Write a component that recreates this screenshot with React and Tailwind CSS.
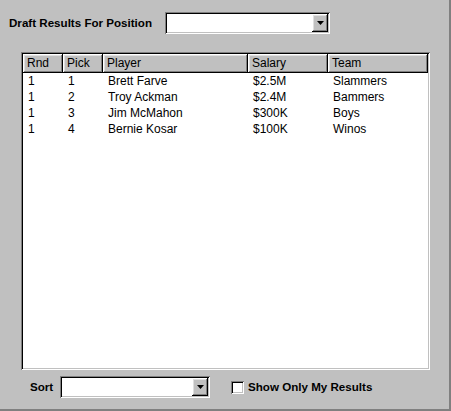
import React from "react";

const sunken =
  "shadow-[inset_1px_1px_0_#808080,inset_-1px_-1px_0_#ffffff,inset_2px_2px_0_#000000,inset_-2px_-2px_0_#c0c0c0]";
const raised =
  "shadow-[inset_-1px_-1px_0_#000000,inset_1px_1px_0_#ffffff,inset_-2px_-2px_0_#808080,inset_2px_2px_0_#dfdfdf]";

const rows = [
  ["1", "1", "Brett Farve", "$2.5M", "Slammers"],
  ["1", "2", "Troy Ackman", "$2.4M", "Bammers"],
  ["1", "3", "Jim McMahon", "$300K", "Boys"],
  ["1", "4", "Bernie Kosar", "$100K", "Winos"],
];

const cols = [
  { name: "Rnd", w: "w-[40px]" },
  { name: "Pick", w: "w-[40px]" },
  { name: "Player", w: "w-[145px]" },
  { name: "Salary", w: "w-[80px]" },
  { name: "Team", w: "w-[100px]" },
];

const Combo = ({ width }) => (
  <div className={`${width} h-[22px] bg-white ${sunken} flex justify-end items-stretch p-[2px]`}>
    <div className={`w-[16px] bg-[#c0c0c0] ${raised} flex items-center justify-center`}>
      <svg width="7" height="4" viewBox="0 0 7 4">
        <polygon points="0,0 7,0 3.5,4" fill="#000" />
      </svg>
    </div>
  </div>
);

export default function App() {
  return (
    <div
      className="w-[451px] h-[411px] bg-[#c0c0c0] border-r-2 border-b-2 border-[#808080] text-black text-[12px]"
      style={{ fontFamily: '"Liberation Sans", Arial, sans-serif' }}
    >
      {/* title row */}
      <div className="flex items-center pt-[12px] pl-[9px]">
        <span className="font-bold text-[11.6px] w-[156px]">Draft Results For Position</span>
        <Combo width="w-[165px]" />
      </div>

      {/* results table */}
      <div className={`mt-[18px] ml-[21px] w-[409px] h-[318px] bg-white p-[2px] ${sunken}`}>
        <div className="flex h-[19px]">
          {cols.map((c) => (
            <div key={c.name} className={`${c.w} bg-[#c0c0c0] ${raised} pl-[4px] leading-[19px]`}>
              {c.name}
            </div>
          ))}
        </div>
        {rows.map((r, i) => (
          <div key={i} className="flex h-[16px] leading-[16px]">
            {r.map((v, j) => (
              <div key={j} className={`${cols[j].w} pl-[5px]`}>
                {v}
              </div>
            ))}
          </div>
        ))}
      </div>

      {/* bottom controls */}
      <div className="flex items-center mt-[6px] pl-[30px]">
        <span className="font-bold text-[11.6px] w-[30px]">Sort</span>
        <Combo width="w-[150px]" />
        <div className={`ml-[21px] w-[13px] h-[13px] bg-white ${sunken}`} />
        <span className="font-bold text-[11.6px] ml-[4px]">Show Only My Results</span>
      </div>
    </div>
  );
}
